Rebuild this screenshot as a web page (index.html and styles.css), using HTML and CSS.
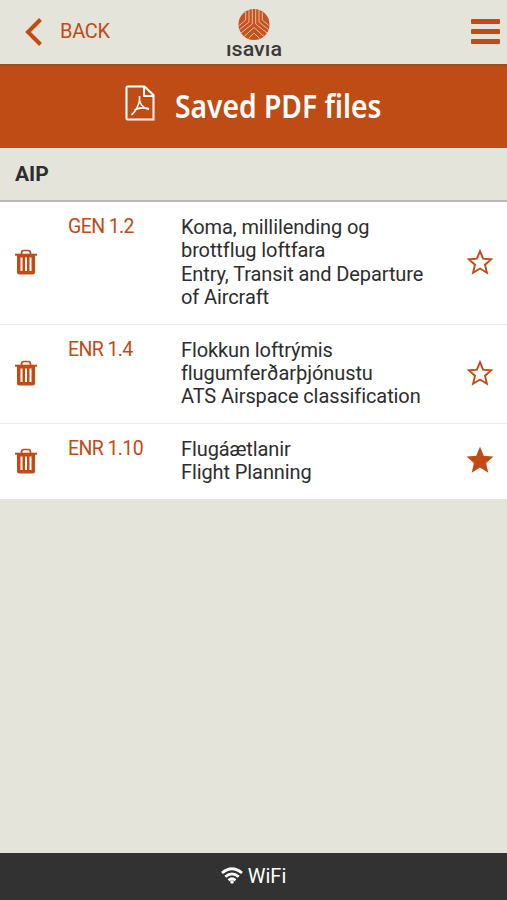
FILE: index.html
```
<!DOCTYPE html>
<html lang="en">
<head>
  <meta charset="UTF-8">
  <meta name="viewport" content="width=device-width, initial-scale=1.0">
  <title>Saved PDF files</title>
  <link rel="stylesheet" href="styles.css">
</head>
<body>
  <svg class="symbols" width="0" height="0">
    <symbol id="trash" viewBox="0 0 22 26">
      <path d="M6.500 5.500V4q0-2.500 2.500-2.500h4q2.500 0 2.500 2.500v1.500" fill="none" stroke="currentColor" stroke-width="1.700"/>
      <path d="M0 4.700h22v2H0z" fill="currentColor"/>
      <path d="M2 6h18v17q0 2.500-2.500 2.500h-13Q2 25.500 2 23zM5.500 8.500v13.500h2V8.500zM10 8.500v13.500h2V8.500zM14.500 8.500v13.500h2V8.500z" fill="currentColor" fill-rule="evenodd"/>
    </symbol>
    <symbol id="star" viewBox="0 0 26 26">
      <path d="M13 2.200l3.100 7.500 8.100.7-6.200 5.300 1.900 8-6.900-4.200-6.900 4.200 1.900-8-6.200-5.300 8.100-.7z" stroke="currentColor" stroke-width="1.900"/>
    </symbol>
  </svg>

  <header class="topbar">
    <a class="back">
      <svg width="18" height="30" viewBox="0 0 18 30"><path d="M15.500 2.500L3 15l12.500 12.500" fill="none" stroke="currentColor" stroke-width="4"/></svg>
      <span>BACK</span>
    </a>
    <svg class="logo" width="58" height="54" viewBox="0 0 58 54">
      <circle cx="29" cy="16.500" r="15.500" fill="#c5521f"/>
      <g fill="none" stroke="#e6bfa3" stroke-width="1">
        <path d="M27.300 1v15L16 25M24 2v12L14.500 21.500M20.700 4v8l-6.500 5.500M30.700 1v15L42 25M34 2v12l9.500 7.500M37.300 4v8l6.500 5.500"/>
        <path d="M29 19.500L19 28.500M29 19.500l10 9M29 25l-5.500 5.500M29 25l5.500 5.500"/>
      </g>
      <text x="1" y="47.500" textLength="56" lengthAdjust="spacingAndGlyphs">ısavıa</text>
    </svg>
    <div class="menu"><i></i><i></i><i></i></div>
  </header>

  <div class="banner">
    <svg width="30" height="36" viewBox="0 0 30 36" fill="none" stroke="#fff" stroke-width="2">
      <path d="M2.500 1.500h17L28.500 10v24.500h-26q-1 0-1-1v-31q0-1 1-1z"/>
      <path d="M19 2v9h9"/>
      <path d="M14.500 11v3.500c0 4-3.500 12-8 15.500M14.500 14.500c.5 4.500 3.500 8.500 9.500 10M9.500 25c4-2 9-2.800 14.500-1.200" stroke-width="1.600"/>
    </svg>
    <h1>Saved PDF files</h1>
  </div>

  <h2 class="section-title">AIP</h2>

  <ul class="files">
    <li class="file">
      <svg class="trash"><use href="#trash"/></svg>
      <span class="code">GEN 1.2</span>
      <p class="name">Koma, millilending og<br>brottflug loftfara<br>Entry, Transit and Departure<br>of Aircraft</p>
      <svg class="star"><use href="#star"/></svg>
    </li>
    <li class="file">
      <svg class="trash"><use href="#trash"/></svg>
      <span class="code">ENR 1.4</span>
      <p class="name">Flokkun loftrýmis<br>flugumferðarþjónustu<br>ATS Airspace classification</p>
      <svg class="star"><use href="#star"/></svg>
    </li>
    <li class="file">
      <svg class="trash"><use href="#trash"/></svg>
      <span class="code">ENR 1.10</span>
      <p class="name">Flugáætlanir<br>Flight Planning</p>
      <svg class="star filled"><use href="#star"/></svg>
    </li>
  </ul>

  <footer class="status">
    <svg width="22" height="17" viewBox="0 0 22 17" fill="none" stroke="#fff" stroke-width="2.800">
      <path d="M1 6q10-8.500 20 0M4.300 9.800q6.700-5.800 13.400 0M7.500 13.200q3.500-3 7 0"/>
      <circle cx="11" cy="15" r="1.800" fill="#fff" stroke="none"/>
    </svg>
    <span>WiFi</span>
  </footer>
</body>
</html>
```
FILE: styles.css
```
* {
  box-sizing: border-box;
}

body {
  margin: 0;
  height: 900px;
  display: flex;
  flex-direction: column;
  background: #e4e4db;
  color: #2d2d2d;
  font-family: Roboto, "Liberation Sans", sans-serif;
  font-size: 20px;
}

.symbols {
  display: block;
  flex: none;
}

.topbar {
  height: 66px;
  display: grid;
  grid-template-columns: 1fr 58px 1fr;
  padding: 0 7px 0 25px;
  border-bottom: 2px solid #9f4a20;
  color: #c04b14;
}

.back {
  display: flex;
  align-items: center;
  gap: 17px;
  height: 64px;
}

.back span {
  letter-spacing: -0.3px;
  margin-top: -2px;
}

.logo {
  margin: 8px 0 0 -9px;
}

.logo text {
  font-family: Roboto, "Liberation Sans", sans-serif;
  font-size: 20px;
  font-weight: 500;
  fill: #3a3a38;
}

.menu {
  justify-self: end;
  display: flex;
  flex-direction: column;
  gap: 5px;
  padding-top: 19px;
}

.menu i {
  width: 29px;
  height: 5px;
  border-radius: 1px;
  background: #c04b14;
}

.banner {
  height: 82px;
  display: flex;
  padding: 19px 0 0 125px;
  gap: 20px;
  background: #bf4c14;
  color: #fff;
}

.banner h1 {
  margin: 1px 0 0;
  font-family: "Noto Sans", sans-serif;
  font-size: 32px;
  font-weight: 600;
  line-height: 40px;
  white-space: nowrap;
  transform: scaleX(0.882);
  transform-origin: left;
}

.section-title {
  height: 54px;
  margin: 0;
  padding-left: 15px;
  border-bottom: 2px solid #b9b8b2;
  font-size: 21px;
  font-weight: 700;
  line-height: 52px;
}

.files {
  margin: 0;
  padding: 0;
  list-style: none;
}

.file {
  display: grid;
  grid-template-columns: 53px 113px 1fr 26px;
  align-items: center;
  padding: 14px 14px 14px 15px;
  background: #fff;
  color: #c04b14;
  border-bottom: 1px solid #e9e9e7;
}

.file:last-child {
  border-bottom: none;
}

.trash {
  width: 22px;
  height: 26px;
  margin-top: -1px;
}

.code {
  align-self: start;
  font-size: 19.5px;
  letter-spacing: -0.6px;
  line-height: 22px;
}

.name {
  margin: 0;
  font-size: 20px;
  letter-spacing: -0.1px;
  line-height: 23.4px;
  color: #2d2d2d;
  white-space: nowrap;
}

.star {
  width: 26px;
  height: 26px;
  margin-top: -2px;
  fill: none;
}

.filled {
  fill: currentColor;
}

.status {
  height: 47px;
  margin-top: auto;
  display: flex;
  justify-content: center;
  align-items: center;
  gap: 5px;
  padding-bottom: 2px;
  background: #323232;
  color: #fff;
}
```
